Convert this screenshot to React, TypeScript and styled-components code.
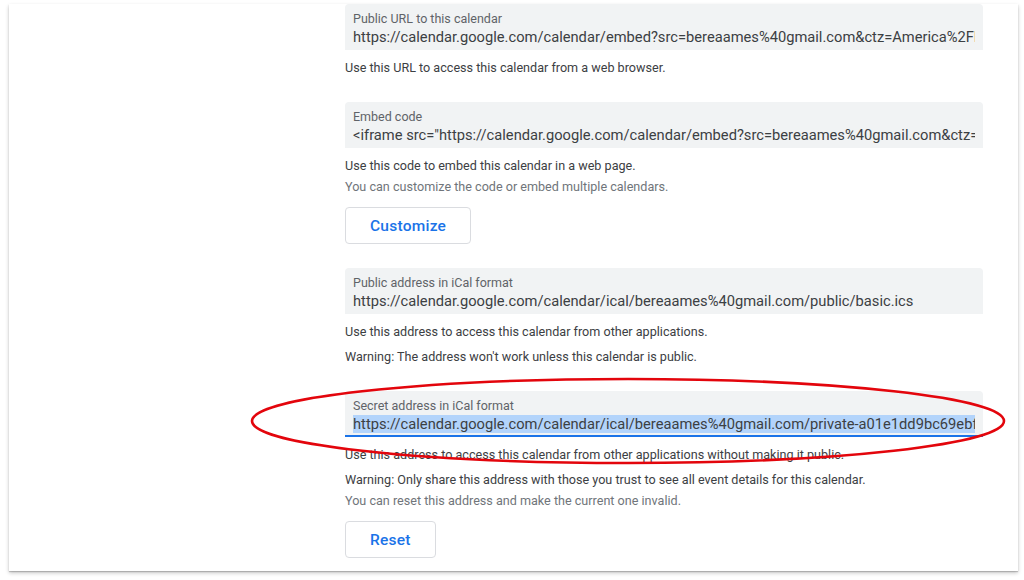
import React from 'react';
import styled, { createGlobalStyle } from 'styled-components';

interface Address {
  label: string,
  value: string,
  selected?: boolean,
  notes: { text: string, subtle?: boolean, gap?: number }[],
  button?: string
}

const addresses: Address[] = [
  {
    label: 'Public URL to this calendar',
    value: 'https://calendar.google.com/calendar/embed?src=bereaames%40gmail.com&ctz=America%2FNew_York',
    notes: [{ text: 'Use this URL to access this calendar from a web browser.' }]
  },
  {
    label: 'Embed code',
    value: '<iframe src="https://calendar.google.com/calendar/embed?src=bereaames%40gmail.com&ctz=America%2FNew_York" style="border: 0" width="800" height="600" frameborder="0" scrolling="no"></iframe>',
    notes: [
      { text: 'Use this code to embed this calendar in a web page.' },
      { text: 'You can customize the code or embed multiple calendars.', subtle: true, gap: 1 }
    ],
    button: 'Customize'
  },
  {
    label: 'Public address in iCal format',
    value: 'https://calendar.google.com/calendar/ical/bereaames%40gmail.com/public/basic.ics',
    notes: [
      { text: 'Use this address to access this calendar from other applications.' },
      { text: "Warning: The address won't work unless this calendar is public.", gap: 5 }
    ]
  },
  {
    label: 'Secret address in iCal format',
    value: 'https://calendar.google.com/calendar/ical/bereaames%40gmail.com/private-a01e1dd9bc69ebf2c4d7a8e5b3f60c91/basic.ics',
    selected: true,
    notes: [
      { text: 'Use this address to access this calendar from other applications without making it public.' },
      { text: 'Warning: Only share this address with those you trust to see all event details for this calendar.', gap: 5 },
      { text: 'You can reset this address and make the current one invalid.', subtle: true, gap: 1 }
    ],
    button: 'Reset'
  }
];

const GlobalStyle = createGlobalStyle`
  body {
    margin: 0;
    background: #ffffff;
    font-family: Roboto, "Liberation Sans", Arial, sans-serif;
  }
`

const Page = styled.div`
  position: relative;
  width: 1024px;
  height: 580px;
  padding: 4px 6px 0 9px;
  box-sizing: border-box;
  overflow: hidden;
`

const Card = styled.div`
  height: 567px;
  background: #ffffff;
  box-shadow: 0 1px 1px rgba(0, 0, 0, 0.18), 0 2px 4px rgba(0, 0, 0, 0.22);
  padding: 0 35px 0 336px;
  display: flex;
  flex-direction: column;
  gap: 24px;
  overflow: hidden;
`

const Section = styled.div`
  display: flex;
  flex-direction: column;
  align-items: flex-start;
`

const Field = styled.div<{ $selected?: boolean }>`
  align-self: stretch;
  background: #f1f3f4;
  border-radius: 4px 4px 0 0;
  padding: 7px 8px ${p => p.$selected ? '1px' : '3px'};
  border-bottom: ${p => p.$selected ? '2px solid #1a73e8' : 'none'};
  min-width: 0;
`

const Label = styled.div`
  font-size: 12.5px;
  line-height: 16px;
  color: #5f6368;
`

const Value = styled.div<{ $selected?: boolean }>`
  font-size: 14.7px;
  line-height: 20px;
  color: #3c4043;
  white-space: nowrap;
  overflow: hidden;

  span {
    background: ${p => p.$selected ? '#b3d4fb' : 'transparent'};
  }
`

const Note = styled.div<{ $subtle?: boolean, $gap?: number }>`
  font-size: 12.6px;
  line-height: 20px;
  margin-top: ${p => p.$gap ?? 8}px;
  color: ${p => p.$subtle ? '#70757a' : '#3c4043'};
`

const Button = styled.button`
  margin-top: 10px;
  height: 37px;
  padding: 0 24px;
  border: 1px solid #dadce0;
  border-radius: 4px;
  background: #ffffff;
  color: #1a73e8;
  font-family: Roboto, "Liberation Sans", Arial, sans-serif;
  font-size: 15.5px;
  font-weight: 500;
  letter-spacing: 0.25px;
  cursor: pointer;
`

const Annotation = styled.svg`
  position: absolute;
  left: 240px;
  top: 370px;
  pointer-events: none;
`

export default function App() {
  return (
    <Page>
      <GlobalStyle />
      <Card>
        {addresses.map((a, index) => (
          <Section key={index}>
            <Field $selected={a.selected}>
              <Label>{a.label}</Label>
              <Value $selected={a.selected}><span>{a.value}</span></Value>
            </Field>
            {a.notes.map((n, i) => (
              <Note key={i} $subtle={n.subtle} $gap={n.gap}>{n.text}</Note>
            ))}
            {a.button && <Button>{a.button}</Button>}
          </Section>
        ))}
      </Card>
      <Annotation width="780" height="110" viewBox="0 0 780 110">
        <ellipse cx="388" cy="51" rx="376" ry="42" fill="none" stroke="#e3050c" strokeWidth="2.6" />
      </Annotation>
    </Page>
  )
}
